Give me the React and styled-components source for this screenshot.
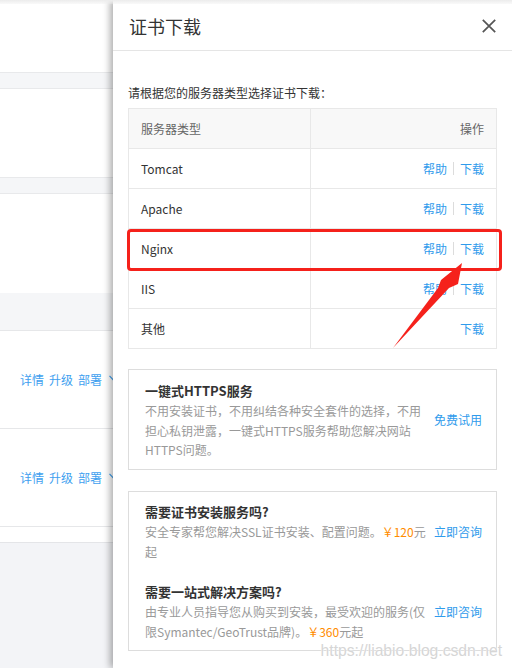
import React from "react";
import styled, { createGlobalStyle } from "styled-components";

const GlobalStyle = createGlobalStyle`
  html, body { margin: 0; padding: 0; background: #fff; }
  body { font-family: "Noto Sans CJK SC", "Open Sans", sans-serif; }
  * { box-sizing: border-box; }
`;

const Page = styled.div`
  position: relative;
  width: 512px;
  height: 668px;
  overflow: hidden;
  background: #fff;
`;

/* ---------- background page ---------- */
const Main = styled.div`
  display: flex;
  flex-direction: column;
  height: 100%;
`;
const Blank = styled.div`
  height: ${(p) => p.$h}px;
  flex-shrink: 0;
`;
const Band = styled.div`
  height: 17px;
  flex-shrink: 0;
  background: #f5f6f8;
  border-top: 1px solid #e8e9eb;
  border-bottom: 1px solid #e8e9eb;
`;
const ListHead = styled.div`
  height: 38px;
  flex-shrink: 0;
  background: #f5f6f8;
  border-bottom: 1px solid #e6e7e9;
`;
const ListRow = styled.div`
  height: 98px;
  flex-shrink: 0;
  display: flex;
  align-items: center;
  gap: 5px;
  padding-left: 20px;
  border-bottom: 1px solid #e6e7e9;
`;
const RowLink = styled.span`
  font-size: 12px;
  line-height: 16px;
  color: #3ea0ef;
`;
const Chevron = styled.svg`
  width: 8px;
  height: 6px;
  margin-left: 2px;
  margin-top: -3px;
`;
const Footer = styled.div`
  flex: 1;
  background: #f3f4f7;
  border-top: 1px solid #e4e5e8;
`;

/* ---------- drawer ---------- */
const Drawer = styled.aside`
  position: absolute;
  top: 0;
  right: 0;
  bottom: 0;
  width: 399px;
  background: #fff;
  box-shadow: -3px 0 7px rgba(0, 0, 0, 0.32);
  display: flex;
  flex-direction: column;
`;
const DrawerHeader = styled.header`
  height: 51px;
  flex-shrink: 0;
  display: flex;
  align-items: center;
  justify-content: space-between;
  padding: 2px 16px 0 16px;
  border-bottom: 1px solid #e5e5e5;
`;
const Title = styled.h2`
  margin: 0;
  font-size: 18px;
  line-height: 24px;
  font-weight: 400;
  color: #333;
`;
const CloseBtn = styled.button`
  border: 0;
  background: none;
  padding: 0;
  width: 14px;
  height: 14px;
  display: flex;
  cursor: pointer;
`;
const DrawerBody = styled.div`
  padding: 32px 15px 0 15px;
  display: flex;
  flex-direction: column;
`;
const Prompt = styled.p`
  margin: 0 0 5px;
  font-size: 12px;
  line-height: 20px;
  color: #333;
`;
const Table = styled.div`
  display: grid;
  grid-template-columns: 182px 1fr;
  border-top: 1px solid #e8e8e8;
  border-left: 1px solid #e8e8e8;
`;
const Cell = styled.div`
  height: 40px;
  display: flex;
  align-items: center;
  justify-content: ${(p) => (p.$right ? "flex-end" : "flex-start")};
  gap: 6px;
  padding: 0 12px;
  font-size: 12px;
  color: ${(p) => (p.$head ? "#666" : "#333")};
  background: ${(p) => (p.$head ? "#f8f8f8" : "#fff")};
  border-right: 1px solid #e8e8e8;
  border-bottom: 1px solid #e8e8e8;
`;
const Link = styled.a`
  font-size: 12px;
  line-height: 20px;
  color: #2f9bec;
  text-decoration: none;
  white-space: nowrap;
  flex-shrink: 0;
  margin-top: ${(p) => p.$offset || 0}px;
`;
const Sep = styled.span`
  width: 1px;
  height: 13px;
  background: #dcdcdc;
`;
const InfoBox = styled.div`
  margin-top: ${(p) => p.$mt}px;
  border: 1px solid #dddddd;
  padding: ${(p) => p.$pt}px 14px ${(p) => p.$pb}px 16px;
  display: flex;
  flex-direction: column;
  gap: 20px;
`;
const InfoRow = styled.div`
  display: flex;
  align-items: ${(p) => (p.$center ? "center" : "flex-start")};
`;
const InfoText = styled.div`
  flex: 1;
  min-width: 0;
  margin-right: 12px;
`;
const InfoTitle = styled.div`
  font-size: 13px;
  line-height: 20px;
  font-weight: 700;
  color: #333;
`;
const InfoDesc = styled.div`
  font-size: 12px;
  line-height: ${(p) => p.$lh}px;
  color: #999;
  white-space: nowrap;
`;
const Price = styled.span`
  color: #ff8c00;
`;

/* ---------- overlays ---------- */
const TopShade = styled.div`
  position: absolute;
  top: 0;
  left: 0;
  right: 0;
  height: 4px;
  background: linear-gradient(#ececec, rgba(236, 236, 236, 0.3));
  z-index: 3;
`;
const Highlight = styled.div`
  position: absolute;
  left: 127px;
  top: 229px;
  width: 375px;
  height: 42px;
  border: 3px solid #f5211b;
  border-radius: 4px;
  z-index: 4;
  pointer-events: none;
`;
const ArrowLayer = styled.svg`
  position: absolute;
  left: 0;
  top: 0;
  width: 512px;
  height: 668px;
  z-index: 5;
  pointer-events: none;
`;
const Watermark = styled.div`
  position: absolute;
  right: 10px;
  bottom: 8px;
  font-family: "Liberation Sans", Arial, sans-serif;
  font-size: 15.7px;
  line-height: 18px;
  color: #d6d6d6;
  text-shadow: 0 0 1px #fff, 0 0 1px #fff;
  z-index: 6;
`;

const servers = [
  { name: "Tomcat", help: true },
  { name: "Apache", help: true },
  { name: "Nginx", help: true },
  { name: "IIS", help: true },
  { name: "其他", help: false },
];

function RowActions() {
  return (
    <ListRow>
      <RowLink>详情</RowLink>
      <RowLink>升级</RowLink>
      <RowLink>部署</RowLink>
      <Chevron viewBox="0 0 8 6">
        <path d="M0.5 0.8 L4 4.6 L7.5 0.8" fill="none" stroke="#3ea0ef" strokeWidth="1.2" />
      </Chevron>
    </ListRow>
  );
}

export default function App() {
  return (
    <Page>
      <GlobalStyle />
      <Main>
        <Blank $h={72} />
        <Band />
        <Blank $h={88} />
        <Band />
        <Blank $h={99} />
        <ListHead />
        <RowActions />
        <RowActions />
        <Blank $h={15} />
        <Footer />
      </Main>

      <Drawer>
        <DrawerHeader>
          <Title>证书下载</Title>
          <CloseBtn aria-label="关闭">
            <svg width="14" height="14" viewBox="0 0 14 14">
              <path d="M0.8 0.8 L13.2 13.2 M13.2 0.8 L0.8 13.2" stroke="#555" strokeWidth="1.7" fill="none" />
            </svg>
          </CloseBtn>
        </DrawerHeader>
        <DrawerBody>
          <Prompt>请根据您的服务器类型选择证书下载：</Prompt>
          <Table>
            <Cell $head>服务器类型</Cell>
            <Cell $head $right>操作</Cell>
            {servers.map((s) => (
              <React.Fragment key={s.name}>
                <Cell>{s.name}</Cell>
                <Cell $right>
                  {s.help && (
                    <>
                      <Link href="#">帮助</Link>
                      <Sep />
                    </>
                  )}
                  <Link href="#">下载</Link>
                </Cell>
              </React.Fragment>
            ))}
          </Table>

          <InfoBox $mt={20} $pt={11} $pb={9}>
            <InfoRow $center>
              <InfoText>
                <InfoTitle>一键式HTTPS服务</InfoTitle>
                <InfoDesc $lh={19.5}>
                  不用安装证书，不用纠结各种安全套件的选择，不用
                  <br />
                  担心私钥泄露，一键式HTTPS服务帮助您解决网站
                  <br />
                  HTTPS问题。
                </InfoDesc>
              </InfoText>
              <Link href="#">免费试用</Link>
            </InfoRow>
          </InfoBox>

          <InfoBox $mt={21} $pt={10} $pb={8}>
            <InfoRow>
              <InfoText>
                <InfoTitle>需要证书安装服务吗?</InfoTitle>
                <InfoDesc $lh={20}>
                  安全专家帮您解决SSL证书安装、配置问题。<Price>￥120</Price>元
                  <br />
                  起
                </InfoDesc>
              </InfoText>
              <Link href="#" $offset={20}>立即咨询</Link>
            </InfoRow>
            <InfoRow>
              <InfoText>
                <InfoTitle>需要一站式解决方案吗?</InfoTitle>
                <InfoDesc $lh={20}>
                  由专业人员指导您从购买到安装，最受欢迎的服务(仅
                  <br />
                  限Symantec/GeoTrust品牌)。<Price>￥360</Price>元起
                </InfoDesc>
              </InfoText>
              <Link href="#" $offset={20}>立即咨询</Link>
            </InfoRow>
          </InfoBox>
        </DrawerBody>
      </Drawer>

      <TopShade />
      <Highlight />
      <ArrowLayer viewBox="0 0 512 668">
        <polygon points="393,348 438,288 441,280 462,263 458,284 449,288" fill="#f5211b" />
      </ArrowLayer>
      <Watermark>https://liabio.blog.csdn.net</Watermark>
    </Page>
  );
}
